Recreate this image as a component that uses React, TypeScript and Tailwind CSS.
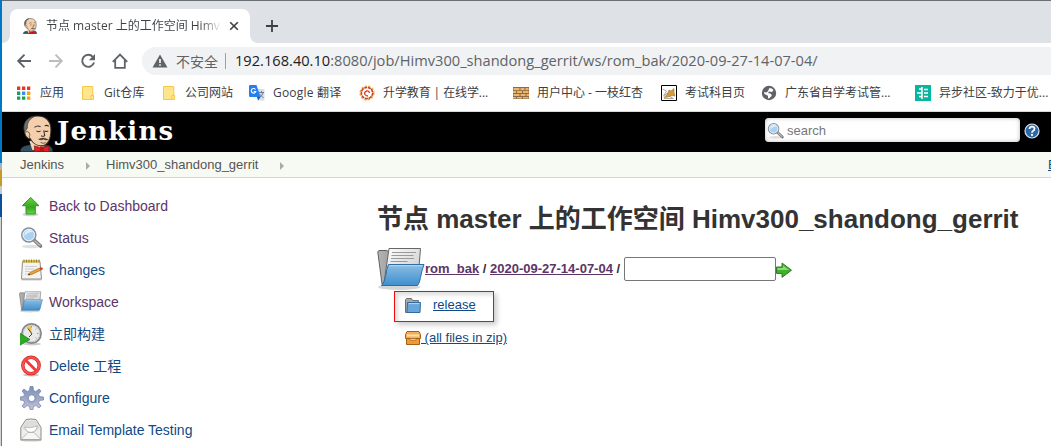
import type { ReactNode } from "react";

const UI = "font-['Open_Sans','Noto_Sans_CJK_SC',sans-serif]";
const PAGE = "font-['Liberation_Sans','Noto_Sans_CJK_SC',sans-serif]";

function Butler({ className, bg }: { className: string; bg: string }) {
  return (
    <svg className={className} viewBox="0 0 32 36">
      <path d="M0 36c0-3 1-5 6-6.500l6-1h10l6 1c3 1.500 4 3.500 4 6.500z" fill="#335061" stroke={bg} strokeWidth=".6" />
      <path d="M9 25l3 9h11l1-8z" fill="#f0d6b7" />
      <path d="M4.500 17C2 8 8 1 17 1c8 0 13 5 13 13 0 9-2 15-9 16-5 0-9-3-11-7-3 0-5-3-5.500-6z" fill="#f4cfae" stroke="#3a332f" strokeWidth="1" />
      <path d="M4.500 17C2 9 6 2 14 1.300c-3 1.700-6 4.200-6.500 7.200-1 2 .5 4-1 5z" fill="#6f6f6f" stroke="#333" strokeWidth=".6" />
      <path d="M5.500 17c2-2 4 0 4 3M10 23c-1-1-1-2-1-3" stroke="#5a4232" strokeWidth=".9" fill="none" />
      <path d="M14 12q3-2.500 6-.5M24 10.500q2-1 4 .5M16 15.500q2 1.500 4 0M24 15.500q2 1 3.500 0M23 15l1 5q-2 1.500-3.500 0" stroke="#3a302b" strokeWidth="1" fill="none" />
      <path d="M18 23.500q5-2.500 9.500.5-3 1-4.500-.5-2 1.500-5 0z" fill="#4a403b" stroke="#4a403b" strokeWidth=".5" />
      <path d="M20 26.800q3 1.500 5 0" stroke="#4a403b" strokeWidth=".8" fill="none" />
      <path d="M14 30l7 2 7-2v6l-7-1-7 1z" fill="#e11d20" stroke="#8a1012" strokeWidth=".6" />
      <rect x="19.500" y="30.500" width="3.500" height="5" fill="#b5121b" />
    </svg>
  );
}

function FolderOpen({ className }: { className: string }) {
  return (
    <svg className={className} viewBox="0 0 48 44">
      <defs>
        <linearGradient id="fo" x1="0" y1="0" x2="0" y2="1">
          <stop offset="0" stopColor="#8cbde3" />
          <stop offset="1" stopColor="#3e8fce" />
        </linearGradient>
        <linearGradient id="fg" x1="0" y1="0" x2="1" y2="0">
          <stop offset="0" stopColor="#b5b5b5" />
          <stop offset="1" stopColor="#707070" />
        </linearGradient>
        <linearGradient id="fp" x1="0" y1="0" x2="1" y2="1">
          <stop offset="0" stopColor="#ffffff" />
          <stop offset="1" stopColor="#c4c4c4" />
        </linearGradient>
      </defs>
      <ellipse cx="22" cy="40" rx="21" ry="3" fill="#000" opacity=".16" />
      <path d="M.8 5l1-1.500h8L12 5h28v32H5z" fill="url(#fg)" stroke="#606060" />
      <path d="M12 1.500h31.500L42 20 34 36H7z" fill="url(#fp)" stroke="#666" />
      <path d="M15 5.500h24M14.500 8.500h22M14 11.500h23M13.500 14.500h17" stroke="#9a9a9a" strokeWidth="1.200" />
      <path d="M11.500 17.500h35.500q-2 5-3.500 13-1 6-3 8H4.500q3-3 4-9 1-8 3-12z" fill="url(#fo)" stroke="#2d6ea5" />
      <path d="M12.500 18.700h33" stroke="#b9d8ef" />
    </svg>
  );
}

function UpArrow() {
  return (
    <svg className="h-6 w-6" viewBox="0 0 24 24">
      <defs>
        <linearGradient id="ua" x1="0" y1="0" x2="0" y2="1">
          <stop offset="0" stopColor="#63d644" />
          <stop offset=".6" stopColor="#35a51f" />
          <stop offset="1" stopColor="#62dc45" />
        </linearGradient>
      </defs>
      <ellipse cx="10.500" cy="20.500" rx="8" ry="1.800" opacity=".18" />
      <path d="M10.700 3.500l8.300 8.200h-3.700v8.300H6v-8.300H2.300z" fill="url(#ua)" stroke="#38912b" />
    </svg>
  );
}

function Magnifier({ className }: { className: string }) {
  return (
    <svg className={className} viewBox="0 0 24 24">
      <ellipse cx="11" cy="20.500" rx="9" ry="1.800" opacity=".12" />
      <path d="M14 14l6.500 6" stroke="#777" strokeWidth="3.600" strokeLinecap="round" />
      <path d="M15 15l5 4.500" stroke="#bbb" strokeWidth="1.600" strokeLinecap="round" />
      <circle cx="8.800" cy="9" r="7" fill="#b5d8f5" stroke="#8a8f94" strokeWidth="1.500" />
      <circle cx="8.800" cy="9" r="5.700" fill="#abd0f0" stroke="#eef4fa" strokeWidth="1" />
      <path d="M4.500 8q1-4 5-4 3 0 3 2-5 0-8 4z" fill="#ddeefb" />
    </svg>
  );
}

function Notepad() {
  return (
    <svg className="h-6 w-6" viewBox="0 0 24 24">
      <path d="M1.500 21h20v1.500h-20z" opacity=".2" />
      <path d="M2.500 3.500h17.500l1.500 17.500h-20z" fill="#f3f3f3" stroke="#8f8f8f" />
      <path d="M2.500 2h17.500v2.800h-17.500z" fill="#d6c361" />
      <path d="M4 1.500v3M6.500 1.500v3M9 1.500v3M11.500 1.500v3M14 1.500v3M16.500 1.500v3M19 1.500v3" stroke="#82702a" strokeWidth=".8" />
      <path d="M5 8.500h12M5 11h9M5 13.500h5M5 16h4" stroke="#c4c4c4" strokeWidth=".8" />
      <path d="M8 17l2-2.600 9.500-4.400 1.200 2.200-9.500 4.500z" fill="#eda42d" stroke="#99611a" strokeWidth=".6" />
      <path d="M19.500 10l1.800-.8q2 .6 1.500 2.200l-2 .8z" fill="#d53b30" />
      <path d="M8 17l1.200-1.500 1 1.300z" fill="#222" />
    </svg>
  );
}

function BuildClock() {
  return (
    <svg className="h-6 w-6" viewBox="0 0 24 24">
      <ellipse cx="12" cy="22" rx="9" ry="1.500" opacity=".2" />
      <circle cx="11.500" cy="11.500" r="9.600" fill="#e9e9e6" stroke="#85858c" strokeWidth="1.700" />
      <circle cx="11.500" cy="11.500" r="8.200" fill="none" stroke="#c9c9cf" />
      <path d="M11.500 11.500L6.500 5.500q3-2 5-1.500z" fill="#efc24a" />
      <path d="M8 6.500l4 5.500-3 3" stroke="#444" strokeWidth="1" fill="none" />
      <path d="M11.500 4v1.500M18.500 11.500h-1.500M16.500 6.500l-1 1M16.500 16.500l-1-1" stroke="#999" />
      <path d="M-.5 11L10 17.500l-10.500 6z" fill="#2dab28" stroke="#197a18" strokeWidth=".7" />
    </svg>
  );
}

function Forbidden() {
  return (
    <svg className="h-6 w-6" viewBox="0 0 24 24">
      <ellipse cx="11" cy="21" rx="8" ry="1.500" opacity=".22" />
      <circle cx="11" cy="11.500" r="8.200" fill="#fff" stroke="#cf2424" strokeWidth="3.400" />
      <circle cx="11" cy="11.500" r="8.200" fill="none" stroke="#f85050" strokeWidth="2.300" />
      <path d="M5.500 6l11 11" stroke="#f03a3a" strokeWidth="2.800" />
    </svg>
  );
}

function Gear() {
  return (
    <svg className="h-6 w-6" viewBox="0 0 24 24">
      <defs>
        <linearGradient id="ge" x1="0" y1="0" x2="0" y2="1">
          <stop offset="0" stopColor="#7890b8" />
          <stop offset="1" stopColor="#c4c0da" />
        </linearGradient>
      </defs>
      <path d="M9.500 4.500L10 .5h3l.5 4 2.300 1L19 3l2 2-2.500 3.300 1 2.200 4 .5v3l-4 .5-1 2.300L21 20l-2 2-3.200-2.500-2.300 1-.5 3h-3l-.5-3-2.300-1L4 22l-2-2 2.500-3.200-1-2.300-3.500-.5v-3l3.500-.5 1-2.200L2 5l2-2 3.200 2.500z" fill="url(#ge)" stroke="#7583a8" strokeWidth=".7" />
      <circle cx="11.700" cy="12.200" r="5.300" fill="#92a0c2" opacity=".6" />
      <circle cx="11.700" cy="12.200" r="3.400" fill="#fff" stroke="#6e7da3" strokeWidth=".8" />
    </svg>
  );
}

function Envelope() {
  return (
    <svg className="h-6 w-6" viewBox="0 0 24 24">
      <ellipse cx="11" cy="22.300" rx="11" ry="1.200" opacity=".2" />
      <path d="M.8 9.500L6 1.500q5-1 10 0l5 8v12.300H.8z" fill="#eeeeec" stroke="#8b8c88" />
      <path d="M2 10l4.500-7.500h9L20 10l-5 4H7z" fill="#dddddb" />
      <path d="M4.500 9q5.500 2 13-1l-1.500 4q-5 4-9 1z" fill="#fff" stroke="#aaa" strokeWidth=".7" />
      <path d="M1.500 21l6.500-6.500h6l6.500 6.500" fill="#f6f6f5" stroke="#aaa" strokeWidth=".8" />
    </svg>
  );
}

function Bookmark({ icon, width, gap, children }: { icon: ReactNode; width: string; gap: string; children: ReactNode }) {
  return (
    <div className={`flex shrink-0 items-center ${width}`}>
      <span className={`flex shrink-0 ${gap}`}>{icon}</span>
      <span className="whitespace-nowrap">{children}</span>
    </div>
  );
}

const FolderMark = () => (
  <svg className="h-4 w-4" viewBox="0 0 16 16">
    <path d="M2.500 1.500h10.300v8.500h.7v4.500h-11z" fill="#ffe68c" stroke="#f4c84a" />
    <path d="M10.800 14.500v-4h2" stroke="#f4c84a" fill="none" />
  </svg>
);

const Globe = () => (
  <svg className="h-4 w-4" viewBox="0 0 16 16">
    <circle cx="8" cy="8" r="7.200" fill="#5f6368" />
    <path d="M8.500 3q2.500 0 4 2l-1.500 2-3-.5-1 1.500 3 .7 .8 2-2.800 2.800-1-.2v-2.500L3.500 9 3 7l2.500.5L7 6z" fill="#fff" />
  </svg>
);

function Bookmarks() {
  return (
    <div className={`flex h-9 items-center overflow-hidden pl-[14px] text-[12px] text-[#3c4043] ${UI}`}>
      <Bookmark width="w-[62px]" gap="mr-2" icon={
        <svg className="h-4 w-4" viewBox="0 0 16 16">
          <path d="M1 1.600h3.300v3.300H1zM6 1.600h3.300v3.300H6zM11 1.600h3.300v3.300H11z" fill="#ea3323" />
          <path d="M1 6.600h3.300v3.300H1zM1 11.400h3.300v3.300H1zM6 11.400h3.300v3.300H6z" fill="#12a05b" />
          <path d="M6 6.600h3.300v3.300H6z" fill="#3787ef" />
          <path d="M11 6.600h3.300v3.300H11zM11 11.400h3.300v3.300H11z" fill="#f9a100" />
        </svg>
      }>应用</Bookmark>
      <Bookmark width="w-[82px]" gap="ml-[2px] mr-2" icon={<FolderMark />}><span className="tracking-[0.100px]">Git仓库</span></Bookmark>
      <Bookmark width="w-[89px]" gap="ml-[1px] mr-2" icon={<FolderMark />}>公司网站</Bookmark>
      <Bookmark width="w-[110px]" gap="mr-2" icon={
        <svg className="h-4 w-4" viewBox="0 0 16 16">
          <path d="M7 4h8.500v11.500H9z" fill="#dcdde0" />
          <path d="M10 7.500h5M12.500 6v1.500M14 8q-1 3-4 5M10.500 9l4 4" stroke="#68809a" fill="none" />
          <path d="M1 0h6.500l4 12H1q-1 0-1-1V1q0-1 1-1z" fill="#2580ed" />
          <path d="M8 12h3.500L9 15.500z" fill="#1558c0" />
          <path d="M6.500 4.500a2.300 2.300 0 1 0 .3 2H4.700" stroke="#fff" strokeWidth="1.100" fill="none" />
        </svg>
      }><span className="tracking-[0.200px]">Google 翻译</span></Bookmark>
      <Bookmark width="w-[153px]" gap="mr-2" icon={
        <svg className="h-4 w-4" viewBox="0 0 16 16" fill="none">
          <circle cx="8" cy="8" r="6.400" stroke="#ecae48" strokeWidth="2.400" strokeDasharray="2.200 1.200" />
          <circle cx="8" cy="8" r="5.600" stroke="#cf3a2a" strokeWidth="1.500" strokeDasharray="3 .8" />
          <path d="M10.500 8q-.5-2.500-3-2-2.500 1-1.500 3.500 1 1.500 3 1.500" stroke="#d22d24" strokeWidth="1.300" />
        </svg>
      }><span className="tracking-[-0.100px]">升学教育 | 在线学...</span></Bookmark>
      <Bookmark width="w-[149px]" gap="ml-[1px] mr-2" icon={
        <svg className="h-4 w-4" viewBox="0 0 16 16">
          <path d="M0 2h16v12H0z" fill="#8a6a48" />
          <path d="M.5 3h6v2.200h-6zM7.500 3h4v2.200h-4zM12.500 3h3v2.200h-3zM0 6h3v2H0zM4 6h5v2H4zM10 6h5.500v2H10zM.5 9h6v2h-6zM7.500 9h5v2h-5zM13.500 9H16v2h-2.500zM0 12h3v1.500H0zM4 12h5v1.500H4zM10 12h5.500v1.500H10z" fill="#efb568" />
        </svg>
      }>用户中心 - 一枝红杏</Bookmark>
      <Bookmark width="w-[100px]" gap="mr-2" icon={
        <svg className="h-4 w-4" viewBox="0 0 16 16">
          <path d="M.5.500h15v15H.5z" fill="#fff" stroke="#000" />
          <path d="M1.500 4l4 2-3 5 4-3 1 3 5 2.500H3" stroke="#aaa" fill="none" />
          <path d="M8 5l2 1L13 3.500v4l1 3.500-3-.5-4 1.500-4 .5L6.500 9z" fill="#d99a35" stroke="#8d6733" strokeWidth=".5" />
        </svg>
      }>考试科目页</Bookmark>
      <Bookmark width="w-[154px]" gap="mr-2" icon={<Globe />}>广东省自学考试管...</Bookmark>
      <Bookmark width="w-[150px]" gap="mr-2" icon={
        <svg className="h-4 w-4" viewBox="0 0 16 16">
          <path d="M0 0h16v16H0z" fill="#08b59f" />
          <path d="M7 2v12M2 8h5M4 4h3M4 11.500h3M9 4.500h4M9 8h4M9 11.500h4" stroke="#fff" strokeWidth="1.500" />
        </svg>
      }>异步社区-致力于优...</Bookmark>
    </div>
  );
}

function BrowserChrome() {
  return (
    <header className={`h-[112px] shrink-0 border-b border-[#d5d8dc] bg-white ${UI}`}>
      <div className="flex h-[43px] items-end border-t border-[#6b6e73] bg-[#dee1e6]">
        <div className="h-2 w-2 bg-white"><div className="h-2 w-2 rounded-br-lg bg-[#dee1e6]" /></div>
        <div className="flex h-[34px] w-[240px] items-center rounded-t-lg bg-white pl-3">
          <Butler className="h-4 w-4" bg="#fff" />
          <span className="ml-2 w-[176px] overflow-hidden whitespace-nowrap bg-gradient-to-r from-[#3c4043] from-[88%] to-transparent bg-clip-text text-[12px] text-transparent">
            节点 master 上的工作空间 Himv
          </span>
          <svg className="ml-[7px] h-[10px] w-[10px]" viewBox="0 0 10 10">
            <path d="M1.200 1.200l7.600 7.600M8.800 1.200L1.200 8.800" stroke="#3c4043" strokeWidth="1.600" />
          </svg>
        </div>
        <div className="h-2 w-2 bg-white"><div className="h-2 w-2 rounded-bl-lg bg-[#dee1e6]" /></div>
        <svg className="mb-[11px] ml-2 h-3 w-3" viewBox="0 0 12 12">
          <path d="M6 0v12M0 6h12" stroke="#3c4043" strokeWidth="1.800" />
        </svg>
      </div>
      <div className="flex h-8 items-end">
        <svg className="mb-[6px] ml-[14px] h-4 w-4" viewBox="0 0 16 16" fill="none" stroke="#5f6368" strokeWidth="1.900">
          <path d="M15 8H2.500M8.500 1.700L2.200 8l6.300 6.300" />
        </svg>
        <svg className="mb-[6px] ml-4 h-4 w-4" viewBox="0 0 16 16" fill="none" stroke="#babcbe" strokeWidth="1.900">
          <path d="M1 8h12.500M7.500 1.700L13.800 8l-6.300 6.300" />
        </svg>
        <svg className="mb-[6px] ml-4 h-4 w-4" viewBox="0 0 16 16" fill="none">
          <path d="M12.800 3.900A6 6 0 1 0 14 9.500" stroke="#5f6368" strokeWidth="1.900" />
          <path d="M15 1v6.200H8.800z" fill="#5f6368" />
        </svg>
        <svg className="mb-[6px] ml-4 h-4 w-4" viewBox="0 0 16 16" fill="none" stroke="#5f6368" strokeWidth="1.800">
          <path d="M.8 8.800L8 1.600l7.200 7.200M3.200 7v7.900h9.600V7" />
        </svg>
        <div className="ml-[14px] flex h-7 flex-1 items-center rounded-l-full bg-[#f0f2f3] pl-[10px] text-[14px]">
          <svg className="h-4 w-4" viewBox="0 0 16 16">
            <path d="M8 1.500l7.500 13H.5z" fill="#5f6368" />
            <path d="M7.200 6h1.600v4H7.200zM7.200 11.200h1.600v1.600H7.200z" fill="#fff" />
          </svg>
          <span className="ml-2 w-[49px] text-[#5f6368]">不安全</span>
          <span className="h-4 w-px bg-[#9da0a4]" />
          <span className="ml-[9px] whitespace-nowrap text-[14.600px] tracking-[0.020px] text-[#5f6368]">
            <span className="text-[#202124]">192.168.40.10</span>:8080/job/Himv300_shandong_gerrit/ws/rom_bak/2020-09-27-14-07-04/
          </span>
        </div>
      </div>
      <Bookmarks />
    </header>
  );
}

const Chevron = ({ className }: { className: string }) => (
  <svg className={`h-2 w-1 ${className}`} viewBox="0 0 4 8"><path d="M0 0l4 4-4 4z" fill="#aaa" /></svg>
);

const tasks: { label: string; icon: ReactNode; visited?: boolean }[] = [
  { label: "Back to Dashboard", icon: <UpArrow />, visited: true },
  { label: "Status", icon: <Magnifier className="h-6 w-6" />, visited: true },
  { label: "Changes", icon: <Notepad /> },
  { label: "Workspace", icon: <FolderOpen className="-ml-px h-[22px] w-6" />, visited: true },
  { label: "立即构建", icon: <BuildClock /> },
  { label: "Delete 工程", icon: <Forbidden /> },
  { label: "Configure", icon: <Gear /> },
  { label: "Email Template Testing", icon: <Envelope /> },
];

export default function App() {
  return (
    <div className="flex h-[446px] w-[1051px] overflow-hidden bg-white">
      <div className="flex w-[2px] shrink-0 flex-col bg-[#8a8a8a]">
        <div className="h-[163px] bg-[#0078c3]" />
        <div className="h-[7px] bg-[#b0b0b0]" />
        <div className="h-4 bg-[#c39b29]" />
        <div className="h-[8px] bg-[#c9c9c9]" />
        <div className="h-[23px] bg-[#07509a]" />
        <div className="flex-1 border-r border-[#777] bg-[#d5d5d5]" />
      </div>
      <div className="flex min-w-0 flex-1 flex-col">
        <BrowserChrome />
        <div className={`flex h-10 shrink-0 items-center bg-black ${PAGE}`}>
          <Butler className="ml-[18px] mt-[3px] h-[37px] w-[33px]" bg="#000" />
          <span className="ml-[4px] w-[130px] pb-[3px] font-['DejaVu_Serif',serif] text-[26px] font-bold leading-none tracking-[1.150px] text-white">Jenkins</span>
          <div className="ml-auto mb-1 flex h-6 w-[255px] items-center rounded-[4px] bg-white pl-[2px] pt-px text-[13px] text-[#777] shadow-[inset_0_0_4px_#bbb]">
            <Magnifier className="mr-[2px] h-[18px] w-[18px]" />
            search
          </div>
          <svg className="mb-[2px] ml-1 mr-[11px] h-4 w-4" viewBox="0 0 16 16">
            <circle cx="8" cy="8" r="7" fill="#2d68a6" stroke="#d9e6f3" strokeWidth="1.200" />
            <path d="M5.500 6q0-2.300 2.500-2.300T10.500 6Q10.500 7 9 8q-1 .5-1 1.700" stroke="#fff" strokeWidth="1.700" fill="none" />
            <circle cx="8" cy="11.900" r="1.100" fill="#fff" />
          </svg>
        </div>
        <nav className={`flex h-[26px] shrink-0 items-center overflow-hidden border-b border-[#d3d7cf] bg-[#f6faf2] pl-[18px] text-[13px] text-[#555] ${PAGE}`}>
          <span className="w-[66px]">Jenkins</span>
          <Chevron className="mr-4 mt-[2px]" />
          <span className="w-[174px]">Himv300_shandong_gerrit</span>
          <Chevron className="mt-[2px]" />
          <span className="ml-auto w-[3px] overflow-hidden whitespace-nowrap text-[#0f4a85] underline">E</span>
        </nav>
        <div className={`flex min-h-0 flex-1 ${PAGE}`}>
          <aside className="flex w-[375px] shrink-0 flex-col pl-[18px] pt-3 text-[14px]">
            {tasks.map((t) => (
              <div key={t.label} className="flex h-8 shrink-0 items-center">
                <span className="w-[29px] shrink-0">{t.icon}</span>
                <span className={t.visited ? "text-[#5c3566]" : "text-[#0f4a85]"}>{t.label}</span>
              </div>
            ))}
          </aside>
          <main className="min-w-0 flex-1 pt-[22px] text-[13px] text-[#333]">
            <h1 className="h-[38px] whitespace-nowrap text-[26px] font-bold leading-[38px]">
              节点 master 上的工作空间 Himv300_shandong_gerrit
            </h1>
            <div className="mt-[10px] flex h-[43px] items-center font-bold">
              <FolderOpen className="mb-[2px] h-[44px] w-12 shrink-0" />
              <span className="mb-px whitespace-pre">
                <a className="text-[#5c3566] underline">rom_bak</a> / <a className="text-[#5c3566] underline">2020-09-27-14-07-04</a> /{" "}
              </span>
              <input className="mb-[2px] h-6 w-[152px] rounded-[2px] border border-[#767676] bg-white" readOnly />
              <svg className="h-4 w-4" viewBox="0 0 16 16">
                <path d="M.5 5h5.500V1l9.500 7.200-9.500 7.200v-4H.5z" fill="#43b02c" stroke="#2c7d20" />
                <path d="M1.500 6h5.500V3.500L13 8H1.500z" fill="#8dd974" />
              </svg>
            </div>
            <div className="ml-[17px] flex h-[31px] w-[100px] items-center border border-[#f00a0a] pb-[3px] pl-[10px] shadow-[3px_3px_5px_#0003,inset_3px_3px_4px_#0002]">
              <svg className="mt-[2px] h-4 w-4" viewBox="0 0 16 16">
                <path d="M.5 14.500v-13l1-1h5l1 2h6v11z" fill="#a8a8a8" stroke="#707070" />
                <path d="M2.500 4.500h13l-.5 10H2z" fill="#68a6da" stroke="#2f6ca3" />
                <path d="M3.500 5.600h11" stroke="#b6d8f2" />
              </svg>
              <a className="ml-3 text-[#0f4a85] underline">release</a>
            </div>
            <div className="ml-[28px] mt-[7px] flex h-[18px] items-center text-[#0f4a85]">
              <svg className="h-4 w-4" viewBox="0 0 16 16">
                <path d="M2 1.500h12l1.500 3v4H.5v-4z" fill="#f3ae57" stroke="#a66015" />
                <path d="M1.500 8.500h13v6h-13z" fill="#ee9a38" stroke="#a66015" />
                <path d="M2 4.500h12v2H2z" fill="#ffe0ae" />
                <path d="M5 8.500h6v1.500H5z" fill="#fff" stroke="#a66015" strokeWidth=".7" />
              </svg>
              <a className="whitespace-pre underline"> (all files in zip)</a>
            </div>
          </main>
        </div>
      </div>
    </div>
  );
}
